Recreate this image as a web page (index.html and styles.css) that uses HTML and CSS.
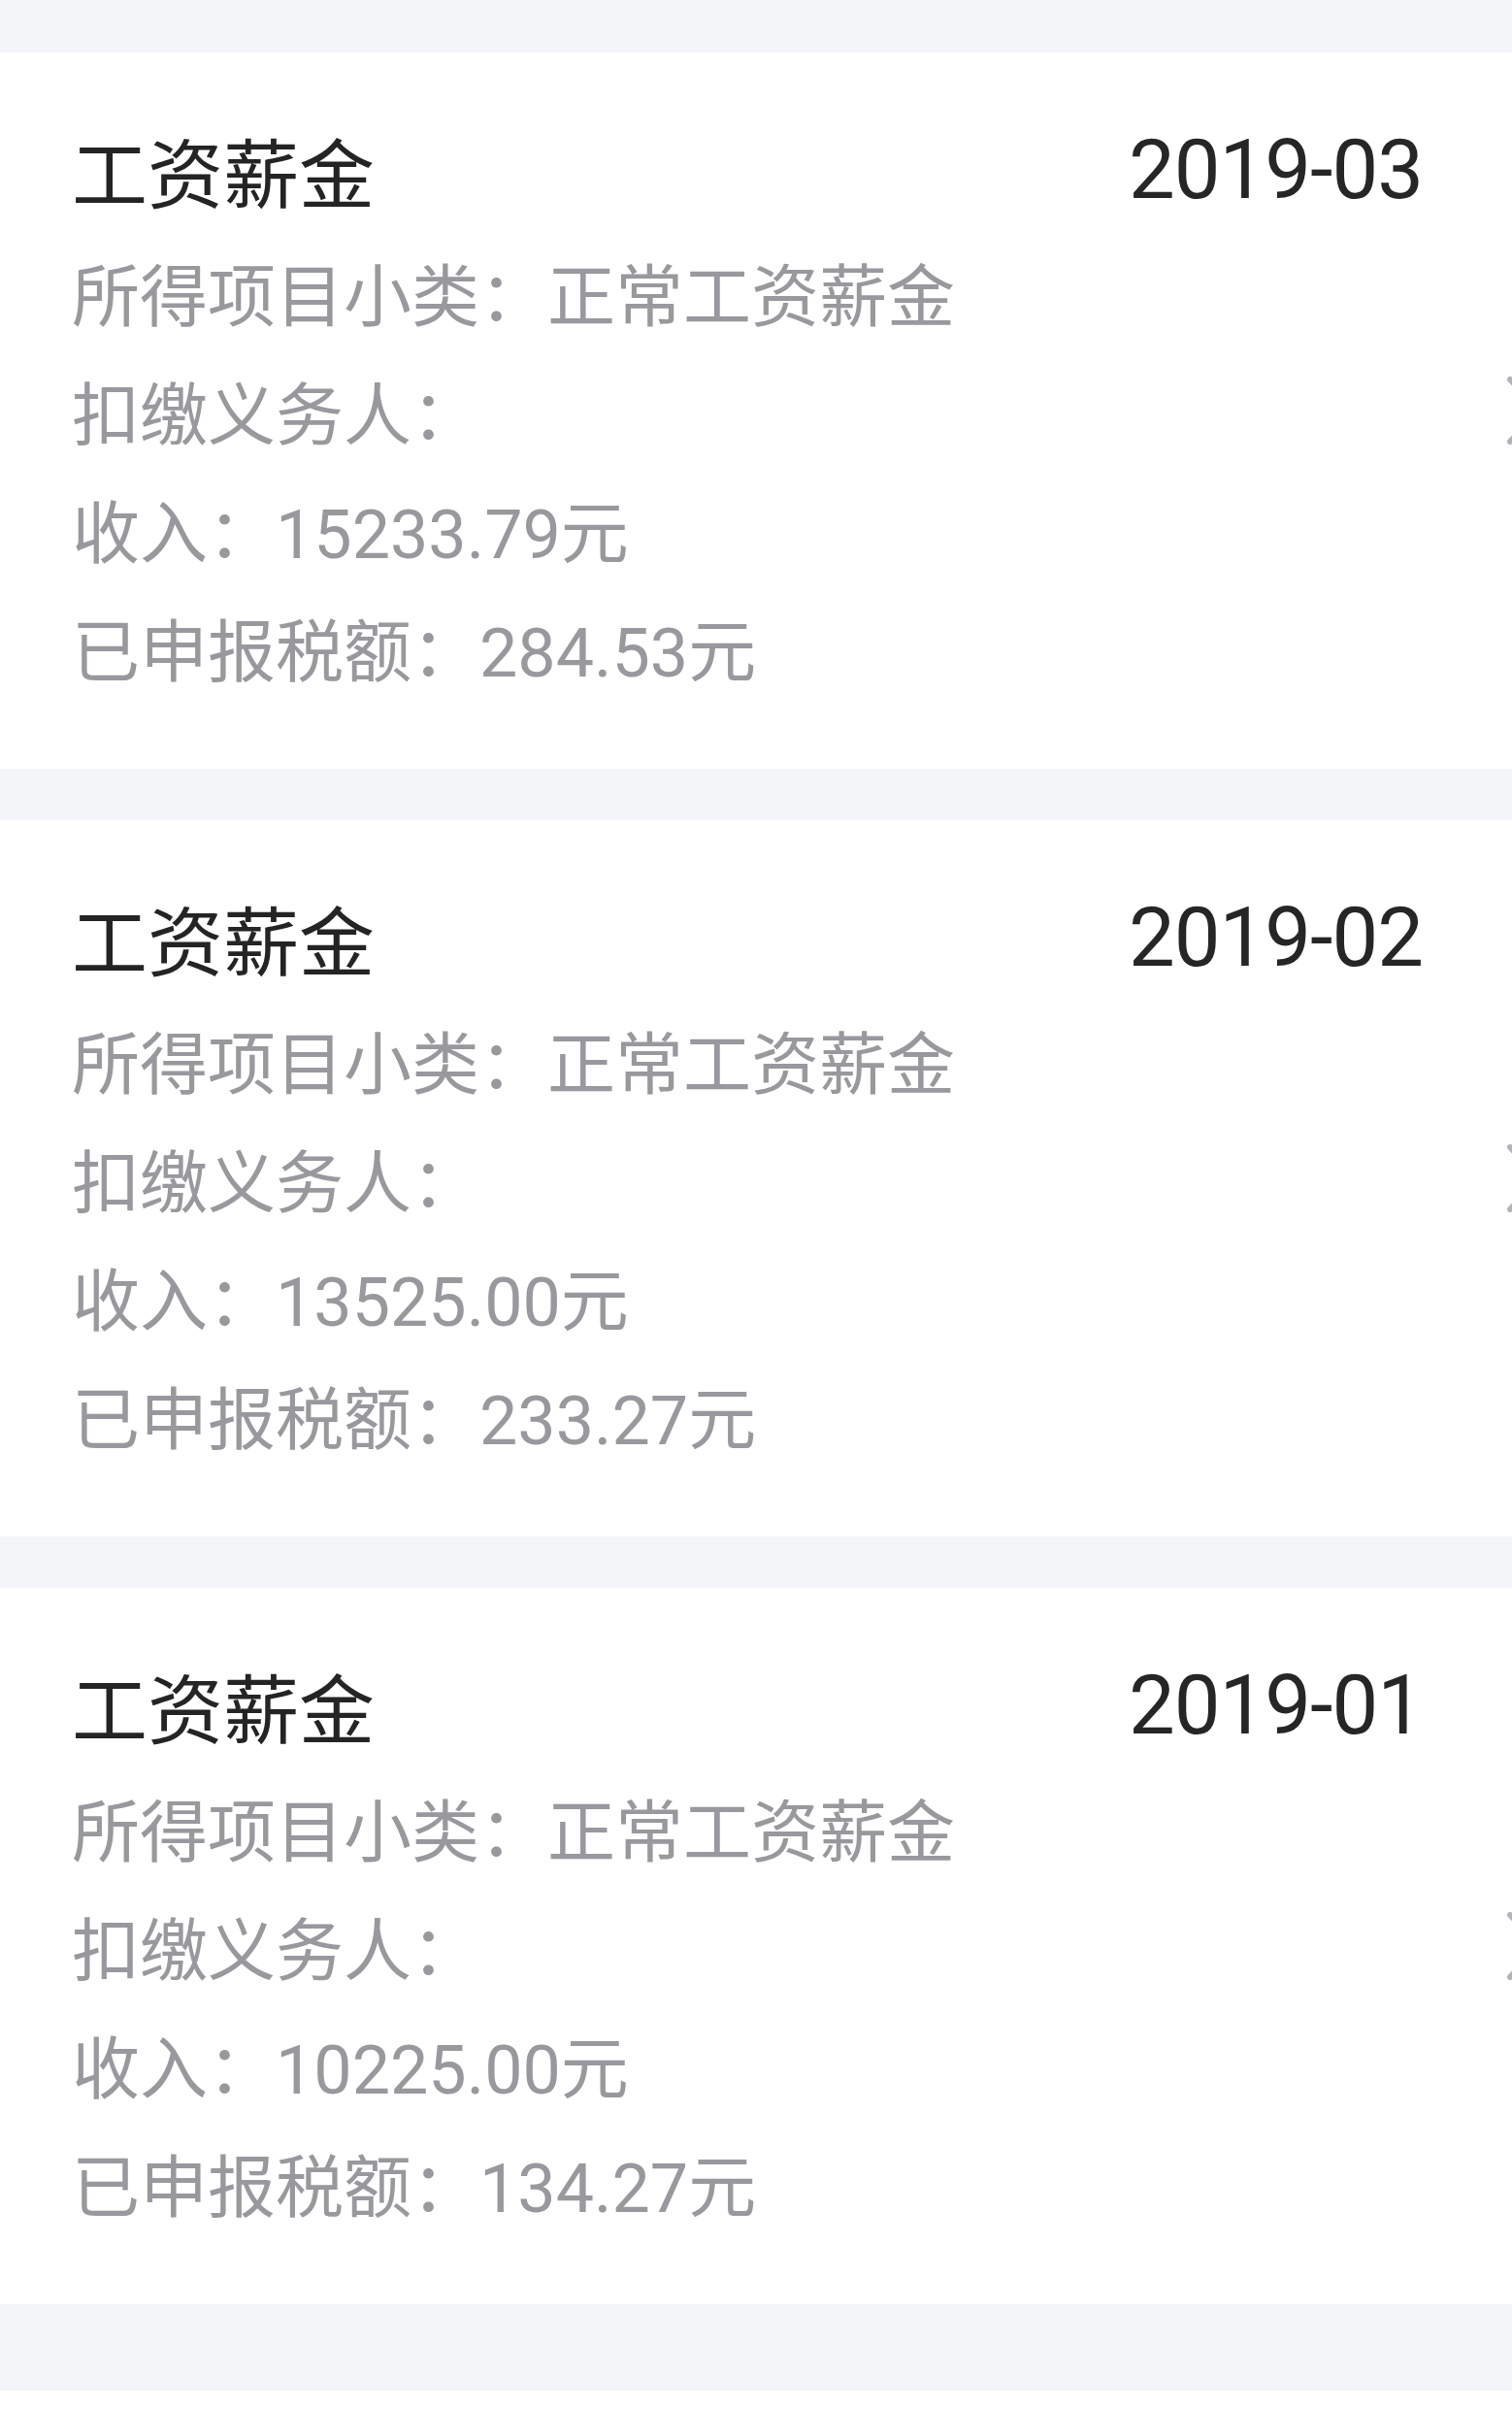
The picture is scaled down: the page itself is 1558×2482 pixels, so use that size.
FILE: index.html
```html
<!DOCTYPE html>
<html lang="zh-CN">
<head>
  <meta charset="UTF-8">
  <title>收入纳税明细</title>
  <link rel="stylesheet" href="styles.css">
</head>
<body>
  <div class="list">
    <div class="card">
      <div class="card-head">
        <span class="title">工资薪金</span>
        <span class="date">2019-03</span>
      </div>
      <div class="row">所得项目小类：正常工资薪金</div>
      <div class="row row-link">
        <span>扣缴义务人：</span>
        <svg class="arrow" width="40" height="72" viewBox="0 0 40 72"><path d="M4 4 L34 36 L4 68" fill="none" stroke="#b4b4b8" stroke-width="6" stroke-linecap="round" stroke-linejoin="round"/></svg>
      </div>
      <div class="row">收入：<span class="num">15233.79</span>元</div>
      <div class="row">已申报税额：<span class="num">284.53</span>元</div>
    </div>

    <div class="card">
      <div class="card-head">
        <span class="title">工资薪金</span>
        <span class="date">2019-02</span>
      </div>
      <div class="row">所得项目小类：正常工资薪金</div>
      <div class="row row-link">
        <span>扣缴义务人：</span>
        <svg class="arrow" width="40" height="72" viewBox="0 0 40 72"><path d="M4 4 L34 36 L4 68" fill="none" stroke="#b4b4b8" stroke-width="6" stroke-linecap="round" stroke-linejoin="round"/></svg>
      </div>
      <div class="row">收入：<span class="num">13525.00</span>元</div>
      <div class="row">已申报税额：<span class="num">233.27</span>元</div>
    </div>

    <div class="card">
      <div class="card-head">
        <span class="title">工资薪金</span>
        <span class="date">2019-01</span>
      </div>
      <div class="row">所得项目小类：正常工资薪金</div>
      <div class="row row-link">
        <span>扣缴义务人：</span>
        <svg class="arrow" width="40" height="72" viewBox="0 0 40 72"><path d="M4 4 L34 36 L4 68" fill="none" stroke="#b4b4b8" stroke-width="6" stroke-linecap="round" stroke-linejoin="round"/></svg>
      </div>
      <div class="row">收入：<span class="num">10225.00</span>元</div>
      <div class="row">已申报税额：<span class="num">134.27</span>元</div>
    </div>

    <div class="card card-next"></div>
  </div>
</body>
</html>
```

FILE: styles.css
```css
body {
  margin: 0;
  background: #f4f5f9;
  font-family: Roboto, "Noto Sans CJK SC", sans-serif;
  color: #222;
  overflow: hidden;
}
.list {
  display: flex;
  flex-direction: column;
  gap: 53px;
  padding-top: 54px;
}
.card {
  background: #fff;
  height: 738px;
  box-sizing: border-box;
  padding: 56px 92px 64px 74px;
  overflow: hidden;
}
.card-head {
  display: flex;
  justify-content: space-between;
  align-items: center;
  height: 130px;
}
.title {
  font-family: "Noto Sans CJK SC", sans-serif;
  font-size: 78px;
  color: #242424;
}
.date {
  font-family: Roboto, sans-serif;
  font-size: 85px;
  letter-spacing: -1px;
  color: #262626;
}
.row {
  font-family: "Noto Sans CJK SC", sans-serif;
  font-size: 70px;
  line-height: 122px;
  height: 122px;
  color: #98989d;
  white-space: nowrap;
}
.row .num {
  font-family: Roboto, sans-serif;
  font-size: 70px;
}
.row-link {
  display: flex;
  justify-content: space-between;
  align-items: center;
}
.arrow {
  margin-right: -126px;
  flex-shrink: 0;
}
.card-next {
  margin-top: 36px;
}
```
